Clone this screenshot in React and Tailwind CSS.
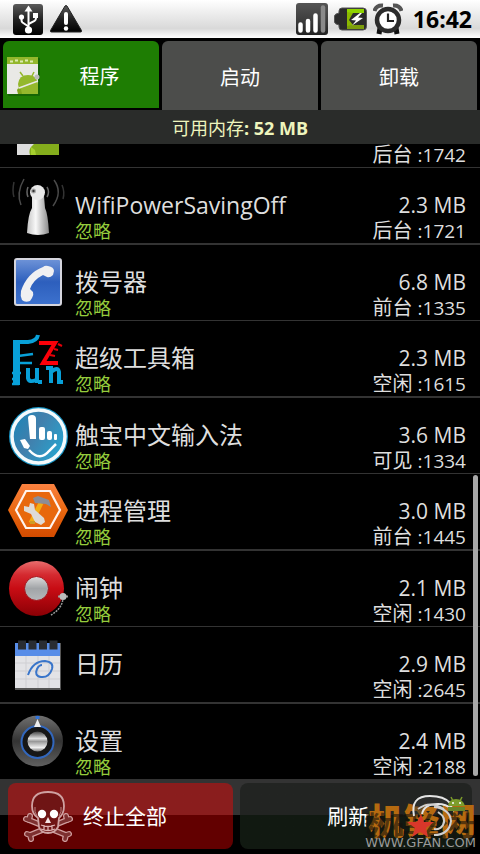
import React from "react";

function UsbIcon() {
  return (
    <svg width="30" height="31" viewBox="0 0 30 31" aria-hidden="true">
      <defs>
        <linearGradient id="plate" x1="0" y1="0" x2="0" y2="1">
          <stop offset="0" stopColor="#5a5a5a" />
          <stop offset="0.5" stopColor="#222" />
          <stop offset="1" stopColor="#000" />
        </linearGradient>
      </defs>
      <rect width="30" height="31" rx="3" fill="url(#plate)" />
      <path d="M15.500 5v20" stroke="#fff" strokeWidth="2" />
      <path d="M15.500 1.500l4 6h-8z" fill="#fff" />
      <path d="M15.500 22.500l-6-4q-1-.8-1-2.500v-3M15.500 20l6-3q1.500-1 1.500-3v-3" fill="none" stroke="#fff" strokeWidth="2" />
      <circle cx="8.500" cy="13" r="2.600" fill="#fff" />
      <rect x="20" y="9" width="5" height="5" fill="#fff" />
      <circle cx="15.500" cy="26" r="3.600" fill="#fff" />
    </svg>
  );
}

function WarningIcon() {
  return (
    <svg width="34" height="28" viewBox="0 0 34 28" aria-hidden="true">
      <path d="M16 1q1-1 2 0l14.500 24.500q.5 1.500-1 1.500H2.500q-1.500 0-1-1.500z" fill="url(#plate)" stroke="#222" />
      <path d="M17 9v9" stroke="#fff" strokeWidth="4" strokeLinecap="round" />
      <circle cx="17" cy="23.500" r="2.200" fill="#fff" />
    </svg>
  );
}

function SignalIcon() {
  return (
    <svg width="32" height="32" viewBox="0 0 32 32" aria-hidden="true">
      <defs>
        <linearGradient id="signal" x1="0" y1="0" x2="0" y2="1">
          <stop offset="0" stopColor="#555" />
          <stop offset="0.6" stopColor="#3a3a3a" />
          <stop offset="1" stopColor="#222" />
        </linearGradient>
      </defs>
      <rect width="32" height="32" rx="3" fill="url(#signal)" />
      <g strokeWidth="4.500" strokeLinecap="round">
        <path d="M4.500 21.500v6M12 18v9.500M19.500 12.500v15" stroke="#fff" />
        <path d="M27 4.500v23" stroke="#8a8a8a" />
      </g>
    </svg>
  );
}

function BatteryIcon() {
  return (
    <svg width="33" height="24" viewBox="0 0 33 24" aria-hidden="true">
      <path d="M8 1h21q3.500 0 3.500 3.500v15q0 3.500-3.500 3.500H8q-3 0-3-3v-2Q.5 17 .5 15V9Q.5 7 5 6V4q0-3 3-3z" fill="#2b2b2b" stroke="#555" />
      <path d="M13 2h17v4H13z" fill="#8fd400" />
      <path d="M13 18h17v4H13z" fill="#7c9d0b" />
      <path d="M13 5l6 1-4 7 4 5-6 1z" fill="#8bb800" />
      <path d="M26 6l-9 7 5 .5-4 5 11-7.500-5-.5 4-4.500z" fill="#fff" />
    </svg>
  );
}

function AlarmIcon() {
  return (
    <svg width="30" height="32" viewBox="0 0 30 32" aria-hidden="true">
      <path d="M1.500 8Q3 2 10 2.500M20 2.500q7-.5 8.500 5.500" fill="none" stroke="#555" strokeWidth="4" />
      <path d="M7 25l-1 6M23 25l1 6" stroke="#111" strokeWidth="5" />
      <circle cx="15" cy="17" r="11" fill="#fff" stroke="#2c2c2c" strokeWidth="4.500" />
      <path d="M15 10.500v7.500h6" fill="none" stroke="#222" strokeWidth="2.200" />
    </svg>
  );
}

function AppTabIcon() {
  return (
    <svg width="34" height="40" viewBox="0 0 34 40" aria-hidden="true">
      <rect x="2" y="1" width="32" height="38" rx="1" fill="#0f5505" opacity="0.6" />
      <path d="M1 0h31v37H1z" fill="#e9e9e6" />
      <path d="M1 0h31v7H1z" fill="#93b72c" />
      <path d="M4 4.500h3m2-1h3m2 1h3m2-1h3m2 1h3" stroke="#dcebb0" strokeWidth="2" />
      <path d="M12 27q1-9 10-9t10 9v10H14z" fill="#94b82c" />
      <path d="M14 15l3 4M28 15l-2 4" stroke="#94b82c" strokeWidth="1.500" />
      <path d="M11 33q1-3 4-1l1 5h-4z" fill="#80a51c" />
      <path d="M13 31l19-7" stroke="#e9e9e6" strokeWidth="1.500" />
      <circle cx="31" cy="20" r="2.500" fill="#bbb" />
    </svg>
  );
}

function RowIcon({ children }) {
  return (
    <svg width="72" height="75" viewBox="0 0 72 75" className="shrink-0" aria-hidden="true">
      {children}
    </svg>
  );
}

const icons = {
  android: (
    <RowIcon>
      <path d="M17 16h42v47H17z" fill="#ddd" />
      <path d="M30 63q-2-6 3-10 12-14 26-2v12z" fill="#84ad1c" />
      <path d="M31 55l4 3 1 5h-5z" fill="#a5cf2e" />
    </RowIcon>
  ),
  wifi: (
    <RowIcon>
      <defs>
        <linearGradient id="tower">
          <stop offset="0" stopColor="#c5c5c5" />
          <stop offset="0.4" stopColor="#f8f8f8" />
          <stop offset="1" stopColor="#8a8a8a" />
        </linearGradient>
      </defs>
      <path d="M32 28h12l1 12q3 6 4 25-11 4-22 0 1-19 5-25z" fill="url(#tower)" />
      <circle cx="37.500" cy="24.500" r="7.500" fill="#e8e8e8" />
      <circle cx="33.500" cy="23" r="2.500" fill="#aaa" />
      <circle cx="33.500" cy="23" r="1.200" fill="#333" />
      <g fill="none" strokeWidth="1.500">
        <path d="M28 19q-2 5 0 10M47 19q3 5 0 10" stroke="#666" />
        <path d="M24 11q-8 14-3 26M54 12q9 12-1 26" stroke="#4a4a4a" />
        <path d="M14 14q-2 9 0 15M62 17q3 7 1 14" stroke="#333" />
      </g>
    </RowIcon>
  ),
  phone: (
    <RowIcon>
      <defs>
        <linearGradient id="blue" x1="0" y1="0" x2="0" y2="1">
          <stop offset="0" stopColor="#6f94d8" />
          <stop offset="0.5" stopColor="#2d5fbd" />
          <stop offset="1" stopColor="#3d72ce" />
        </linearGradient>
      </defs>
      <rect x="15" y="14" width="46" height="46" rx="2" fill="url(#blue)" stroke="#d5d5dd" strokeWidth="2" />
      <path d="M43 22q2-2 5-1 6 1 6 5l-1 4q-3 3-6 2l-4-2q-10 5-13 14l3 3q1 3-1 6l-2 3q-5 2-8-1-2-4-1-9 6-18 22-24z" fill="#f0f0f2" />
    </RowIcon>
  ),
  fun: (
    <RowIcon>
      <g fill="none" stroke="#08a0d8">
        <path d="M13 21h15q9-1 10-7" strokeWidth="4" />
        <path d="M16.500 20v44" strokeWidth="7" />
        <path d="M18 35l15-2M18 42h14" strokeWidth="2.500" />
        <path d="M12 52h9M12 58h8M12 63h7" strokeWidth="2.500" />
        <path d="M28 47v10q1 5 8 2M37 47v15M38 61h4" strokeWidth="4" />
        <path d="M46 47h5v15M51 51q7-6 8 0v10h4" strokeWidth="4" />
      </g>
      <path d="M39 22h16L43 42h15" fill="none" stroke="#fb0009" strokeWidth="4" />
      <path d="M58 23l4 2M50 34l5 1M54 28l4 1" stroke="#e40009" strokeWidth="2" />
    </RowIcon>
  ),
  touch: (
    <RowIcon>
      <defs>
        <linearGradient id="palm" x1="0" y1="0" x2="1" y2="0.600">
          <stop offset="0" stopColor="#1488bb" />
          <stop offset="0.5" stopColor="#427fac" />
          <stop offset="1" stopColor="#29a1cc" />
        </linearGradient>
      </defs>
      <circle cx="38.500" cy="38.500" r="29.500" fill="#1995c5" />
      <circle cx="38.500" cy="38.500" r="26.500" fill="url(#palm)" stroke="#f5fafc" strokeWidth="3.500" />
      <g fill="#fff">
        <path d="M28 20q0-3 4-3t4 4v20h-6z" />
        <rect x="39" y="29" width="6" height="13" rx="2" />
        <rect x="47" y="33" width="5" height="9" rx="2" />
        <rect x="54" y="36" width="3" height="6" rx="1" />
        <path d="M20 42l5-1 5 7-2 3-4-1z" />
      </g>
      <path d="M29 52q11 12 20 1l7-7" fill="none" stroke="#fff" strokeWidth="2.500" />
    </RowIcon>
  ),
  tools: (
    <RowIcon>
      <defs>
        <linearGradient id="orange" x1="0" y1="0" x2="0" y2="1">
          <stop offset="0" stopColor="#fa8140" />
          <stop offset="0.5" stopColor="#ea6810" />
          <stop offset="1" stopColor="#d34b00" />
        </linearGradient>
      </defs>
      <path d="M22 10h32l14 26-14 27H22L8 36z" fill="url(#orange)" />
      <path d="M26 17h24l10 19-10 18H26L16 36z" fill="#e8680d" stroke="#fff4ef" strokeWidth="2.200" />
      <path d="M31 49l10-20" stroke="#f4ad13" strokeWidth="5" />
      <path d="M33 24l5-2 11 4 2 7-5-3-11-1z" fill="#8b8d96" />
      <path d="M24 32l5 1 1-4 4 1 1 6 9 8 1 4-4 3-6-3-4-8-7-3z" fill="#dedbd6" />
      <path d="M30 47h5v3h-5z" fill="#cf9c25" />
    </RowIcon>
  ),
  alarm: (
    <RowIcon>
      <defs>
        <linearGradient id="bell" x1="0" y1="0" x2="0" y2="1">
          <stop offset="0" stopColor="#e96d6d" />
          <stop offset="0.25" stopColor="#d42a30" />
          <stop offset="0.5" stopColor="#c80c14" />
          <stop offset="1" stopColor="#8b0005" />
        </linearGradient>
        <linearGradient id="knob" x1="0" y1="0" x2="0" y2="1">
          <stop offset="0" stopColor="#ddd" />
          <stop offset="0.5" stopColor="#a1a4a7" />
          <stop offset="1" stopColor="#b5b8bb" />
        </linearGradient>
      </defs>
      <circle cx="36.500" cy="37.500" r="27.500" fill="url(#bell)" />
      <circle cx="36.500" cy="37.500" r="12" fill="url(#knob)" stroke="#a51219" />
      <path d="M63 46q0 11-12 18" fill="none" stroke="#999" strokeWidth="1.500" strokeDasharray="2 1" />
      <path d="M58 45.500h10" stroke="#999" strokeWidth="2" />
      <circle cx="63" cy="45.500" r="3.500" fill="#bbb" />
    </RowIcon>
  ),
  calendar: (
    <RowIcon>
      <path d="M15 16h46v47H15z" fill="#555" />
      <path d="M15 24h45v37H15z" fill="#e3e3e6" />
      <path d="M15 16h45v13H15z" fill="#588de8" />
      <path d="M15 36h45M15 44h45M15 52h45M26 29v32M38 29v32M49 29v32" stroke="#cfcfd3" />
      <path d="M18 18h8m2.500 0h8m2.500 0h8m2.500 0h8" stroke="#292c32" strokeWidth="9" />
      <path d="M28 48q5-14 17-14 9 1 7 8-3 9-11 8-7-1-4-8 2-4 5-4" fill="none" stroke="#3975ca" strokeWidth="2" />
    </RowIcon>
  ),
  settings: (
    <RowIcon>
      <defs>
        <linearGradient id="dial" x1="0" y1="0" x2="0" y2="1">
          <stop offset="0" stopColor="#707070" />
          <stop offset="0.5" stopColor="#333" />
          <stop offset="1" stopColor="#606060" />
        </linearGradient>
        <linearGradient id="cap" x1="0" y1="0" x2="0" y2="1">
          <stop offset="0" stopColor="#444" />
          <stop offset="0.35" stopColor="#dfdfdf" />
          <stop offset="0.5" stopColor="#999" />
          <stop offset="0.8" stopColor="#eee" />
          <stop offset="1" stopColor="#777" />
        </linearGradient>
      </defs>
      <circle cx="37.500" cy="37" r="25.500" fill="url(#dial)" />
      <circle cx="37.500" cy="38" r="16" fill="#171717" stroke="#3267bd" strokeWidth="2" />
      <circle cx="37.500" cy="37.500" r="10" fill="url(#cap)" />
      <path d="M35.500 12h4v3h-4z" fill="#3274d8" />
      <path d="M37.500 15l3.500 8h-7z" fill="#eee" />
    </RowIcon>
  ),
};

const rows = [
  { icon: "android", name: "", ignored: false, size: "", state: "后台", pid: 1742 },
  { icon: "wifi", name: "WifiPowerSavingOff", ignored: true, size: "2.3 MB", state: "后台", pid: 1721 },
  { icon: "phone", name: "拨号器", ignored: true, size: "6.8 MB", state: "前台", pid: 1335 },
  { icon: "fun", name: "超级工具箱", ignored: true, size: "2.3 MB", state: "空闲", pid: 1615 },
  { icon: "touch", name: "触宝中文输入法", ignored: true, size: "3.6 MB", state: "可见", pid: 1334 },
  { icon: "tools", name: "进程管理", ignored: true, size: "3.0 MB", state: "前台", pid: 1445 },
  { icon: "alarm", name: "闹钟", ignored: true, size: "2.1 MB", state: "空闲", pid: 1430 },
  { icon: "calendar", name: "日历", ignored: false, size: "2.9 MB", state: "空闲", pid: 2645 },
  { icon: "settings", name: "设置", ignored: true, size: "2.4 MB", state: "空闲", pid: 2188 },
];

function Bones() {
  return (
    <>
      <path d="M6 30L43 45M44 30L7 45" />
      <path d="M6 30L3 29M6 30L7 26M43 45l3-1M43 45l-1 4M44 30l3-1M44 30l-1-4M7 45l-3-1M7 45l1 4" />
    </>
  );
}

function SkullIcon() {
  return (
    <svg width="50" height="52" viewBox="0 0 50 52" aria-hidden="true" className="shrink-0">
      <g fill="none" strokeLinecap="round">
        <g stroke="#cf9d9d" strokeWidth="6"><Bones /></g>
        <g stroke="#7d3030" strokeWidth="3.500"><Bones /></g>
      </g>
      <path d="M16 37l-1-9q-6-4-6-12Q9 2 25 2t16 14q0 8-5 12l-1 9q-3 6-10 6t-9-6z" fill="#6f1515" stroke="#cfa2a2" strokeWidth="1.800" />
      <path d="M14 26q-3-4-2-9M36 26q3-4 2-9" fill="none" stroke="#b98080" />
      <circle cx="19" cy="24" r="4.200" fill="#fff" />
      <circle cx="31" cy="24" r="4.200" fill="#fff" />
      <path d="M25 27l3 6h-6z" fill="#f5e5e5" />
      <path d="M18 35q7 3 14 0M18 39q7 3 14 0M21 35v5M25 36v5M29 35v5" fill="none" stroke="#dcb0b0" strokeWidth="1.300" />
    </svg>
  );
}

function Watermark() {
  return (
    <div className="pointer-events-none absolute right-1 bottom-0 h-[62px] w-[116px]">
      <span className="absolute right-0 bottom-3 text-[36px] leading-10 font-black whitespace-nowrap text-[#b56a10]">机锋网</span>
      <span className="absolute right-0 bottom-3 text-[28px] leading-8 font-bold whitespace-nowrap text-[#15110c]/60">数码公社</span>
      <svg width="116" height="62" viewBox="0 0 116 62" className="absolute inset-0" aria-hidden="true">
        <path d="M54 24Q50 4 70 4q14 0 20 7l2 6q-6-5-14-5-14 0-16 10" fill="#333" fillOpacity="0.500" stroke="#e4e4e4" strokeWidth="2" />
        <path d="M58 17q12-9 26 0M74 15q16 2 17 14-2 14-17 14M78 20q9 6 5 13-3 5-9 4" fill="none" stroke="#cfcfcf" strokeWidth="2" />
        <path d="M61 22l3 8h10l-8 6 2 9-8-5-8 5 3-9-8-6h10z" fill="#d9372a" />
        <path d="M88 14q1-7 8-7t9 7z" fill="#7d9d2c" />
        <path d="M91 5l2 4M102 5l-2 4" stroke="#7d9d2c" strokeWidth="1.500" />
        <path d="M88 15h17v4H88z" fill="#68862a" />
        <circle cx="93" cy="11" r="1" fill="#fff" />
        <circle cx="100" cy="11" r="1" fill="#fff" />
      </svg>
      <span className="absolute right-0 bottom-1 font-['DejaVu_Sans',sans-serif] text-[13px] leading-[14px] whitespace-nowrap text-[#999]">WWW.GFAN.COM</span>
    </div>
  );
}

export default function App() {
  return (
    <div className="flex h-screen flex-col overflow-hidden bg-black font-['Open_Sans','Noto_Sans_CJK_SC',sans-serif] text-[#dedede]">
      <header className="flex h-[38px] shrink-0 items-center bg-linear-to-b from-white via-[#d9d9d9] via-75% to-white pr-2 pl-[13px] text-black">
        <UsbIcon />
        <span className="ml-[6px]"><WarningIcon /></span>
        <div className="ml-auto flex items-center gap-[6px]">
          <SignalIcon />
          <BatteryIcon />
          <AlarmIcon />
          <time className="ml-1 text-[23px] leading-8 font-bold">16:42</time>
        </div>
      </header>

      <nav className="grid h-[72px] shrink-0 grid-cols-3 gap-[3px] px-[3px] pt-[3px] text-[20px] leading-6 text-white">
        <button className="mb-[2px] flex items-center rounded-t-md bg-[#1e7d03] pt-1 pl-[3px]">
          <AppTabIcon />
          <span className="flex-1 text-center">程序</span>
        </button>
        <button className="rounded-t-md bg-[#4c4d4b] pt-1">启动</button>
        <button className="rounded-t-md bg-[#4c4d4b] pt-1">卸载</button>
      </nav>

      <p className="h-[34px] shrink-0 bg-[#2a2c2a] text-center text-[18px] leading-9 text-[#eef5bd]">
        可用内存<b>: 52 MB</b>
      </p>

      <main className="relative min-h-0 flex-1">
        <ul className="flex h-full flex-col justify-end overflow-hidden">
          {rows.map((r) => (
            <li key={r.pid} className="flex shrink-0 border-b border-[#333] pr-[14px] even:border-b-2">
              {icons[r.icon]}
              <div className="ml-[3px] flex h-[75px] flex-1 flex-col pt-[23px]">
                <span className={/^\w+$/.test(r.name) ? "text-[23px] leading-7" : "text-[24px] leading-7"}>{r.name}</span>
                {r.ignored && <span className="text-[18px] leading-6 text-[#95cc3c]">忽略</span>}
              </div>
              <div className="flex h-[75px] flex-col items-end pt-[23px]">
                <span className="h-7 text-[21px] leading-7">{r.size}</span>
                <span className="text-[19px] leading-6">
                  <span className="text-[20px]">{r.state}</span> :{r.pid}
                </span>
              </div>
            </li>
          ))}
        </ul>
        <div className="absolute top-[52%] right-[2px] bottom-1 w-[5px] rounded-full bg-[#a8a8a8]" />
      </main>

      <footer className="relative grid h-[74px] shrink-0 grid-cols-[225fr_231fr] gap-[7px] bg-linear-to-b from-[#333] from-[35px] to-black to-[35px] px-2 pt-[3px] pb-[5px] text-[21px] leading-6 text-white">
        <button className="flex items-center gap-[10px] rounded-lg bg-linear-to-b from-[#8a1d1d] from-[32px] to-[#620000] to-[32px] pl-[15px]">
          <SkullIcon />
          <span>终止全部</span>
        </button>
        <button className="rounded-lg bg-linear-to-b from-[#222422] from-[32px] to-[#111911] to-[32px] pr-4">刷新</button>
        <Watermark />
      </footer>
    </div>
  );
}
